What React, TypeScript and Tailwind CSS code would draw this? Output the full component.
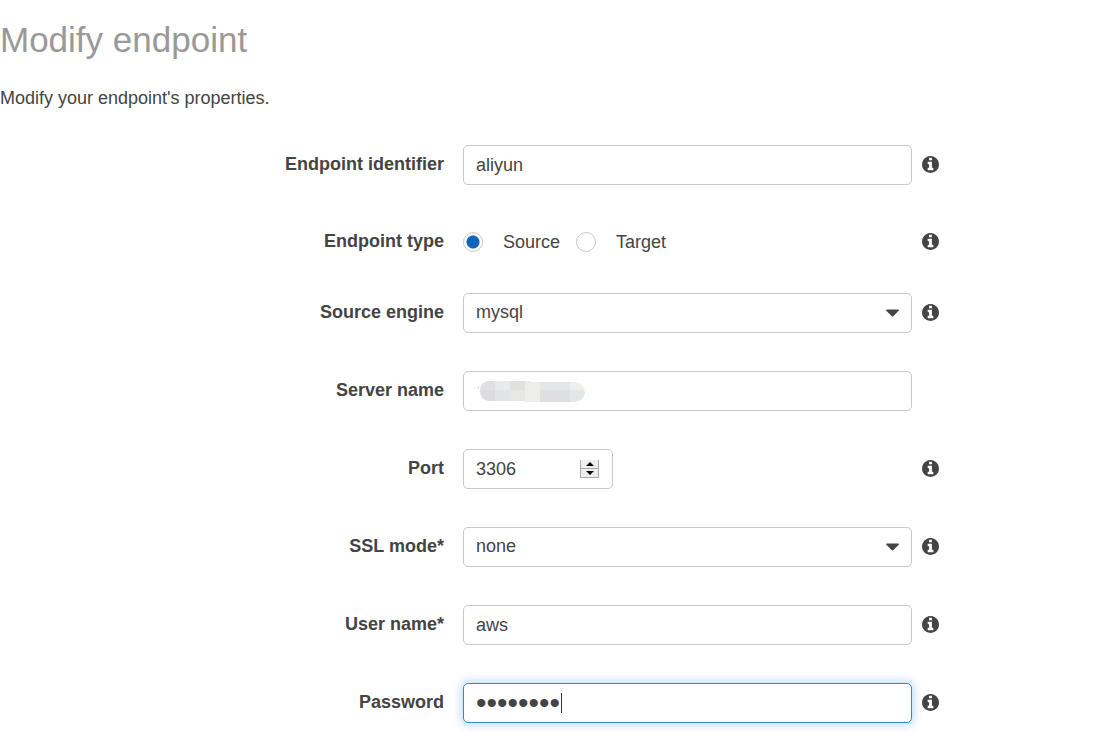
import { useRef, useState, type ReactNode } from "react";

function InfoIcon() {
  return (
    <svg viewBox="0 0 1536 1536" className="size-[17px] fill-current" aria-hidden="true">
      <path d="M1024 1248v-160q0-14-9-23t-23-9h-96v-512q0-14-9-23t-23-9h-320q-14 0-23 9t-9 23v160q0 14 9 23t23 9h96v320h-96q-14 0-23 9t-9 23v160q0 14 9 23t23 9h448q14 0 23-9t9-23zm-128-896v-160q0-14-9-23t-23-9h-192q-14 0-23 9t-9 23v160q0 14 9 23t23 9h192q14 0 23-9t9-23zm640 416q0 209-103 385.500t-279.500 279.500-385.500 103-385.500-103-279.500-279.500-103-385.500 103-385.500 279.500-279.500 385.500-103 385.500 103 279.500 279.500 103 385.500z" />
    </svg>
  );
}

const fieldClass =
  "h-10 w-full min-w-0 appearance-none rounded-[5px] border border-[#c8c8c8] bg-white px-3 text-[#444] outline-none focus:border-[#3184dd] focus:shadow-[0_0_10px_2px_rgba(49,132,221,0.3)]";

type RowProps = {
  label: string;
  htmlFor?: string;
  id?: string;
  info?: boolean;
  className?: string;
  children: ReactNode;
};

function Row({ label, htmlFor, id, info = true, className = "", children }: RowProps) {
  const labelClass = "pr-[19px] pb-[2px] text-right font-bold";
  return (
    <div className={`grid grid-cols-[minmax(0,463fr)_minmax(0,449fr)_minmax(0,202fr)] items-center ${className}`}>
      {htmlFor ? (
        <label htmlFor={htmlFor} className={labelClass}>{label}</label>
      ) : (
        <span id={id} className={labelClass}>{label}</span>
      )}
      {children}
      {info && (
        <button type="button" aria-label={`${label} info`} className="ml-[10px] flex h-[18px] w-[17px] cursor-pointer items-start">
          <InfoIcon />
        </button>
      )}
    </div>
  );
}

function SelectField({ id, options }: { id: string; options: string[] }) {
  return (
    <div className="grid items-center">
      <select id={id} className={`col-start-1 row-start-1 pb-[2px] pr-10 ${fieldClass}`}>
        {options.map((o) => (
          <option key={o}>{o}</option>
        ))}
      </select>
      <svg viewBox="0 0 13 8" className="pointer-events-none col-start-1 row-start-1 mr-[13px] h-2 w-[13px] justify-self-end fill-[#444]" aria-hidden="true">
        <path d="M1 0.5h11q1 0 .9.8-.1.4-.5.8L7.200 7.200q-.7.600-1.400 0L.600 2.100Q.2 1.700.1 1.300 0 .5 1 .5z" />
      </svg>
    </div>
  );
}

function RadioOption({ label, value, checked, onSelect }: { label: string; value: string; checked: boolean; onSelect: (v: string) => void }) {
  return (
    <label className="flex items-center gap-5">
      <input
        type="radio"
        name="endpoint-type"
        value={value}
        checked={checked}
        onChange={() => onSelect(value)}
        className="size-5 appearance-none rounded-full border border-[#c8c8c8] bg-white checked:bg-[radial-gradient(circle,#1166bb_6px,white_7px)]"
      />
      {label}
    </label>
  );
}

function MaskedText() {
  return (
    <svg viewBox="0 -1 108 22" className="pointer-events-none col-start-1 row-start-1 ml-[15px] h-[22px] w-[108px]" aria-hidden="true">
      <defs>
        <clipPath id="mask-shape">
          <path d="M9 0h43v1h45q9 1 10 10.500Q106 20 97 21H46v-1H11Q2 19 2 10 2 2 9 0z" />
        </clipPath>
      </defs>
      <rect x="0" y="6" width="1" height="1" fill="#f3b27c" />
      <g clipPath="url(#mask-shape)">
        <rect x="2" width="15" height="9" fill="#e0e0e2" />
        <rect x="17" width="15" height="9" fill="#e8eaee" />
        <rect x="32" width="15" height="9" fill="#e0e0df" />
        <rect x="2" y="9" width="15" height="11" fill="#dcdcde" />
        <rect x="17" y="9" width="15" height="11" fill="#e2e3e7" />
        <rect x="32" y="9" width="15" height="11" fill="#e7e7e8" />
        <rect x="47" width="15" height="21" fill="#ededec" />
        <rect x="62" y="1" width="30" height="8" fill="#e4e7e7" />
        <rect x="62" y="9" width="30" height="12" fill="#dfdfe0" />
        <rect x="92" y="1" width="15" height="8" fill="#eeefef" />
        <rect x="92" y="9" width="15" height="12" fill="#e5e6ea" />
      </g>
    </svg>
  );
}

const stepClass =
  "flex h-[9px] w-[19px] items-center justify-center border-x border-b border-[#aaa] bg-[#eee]";

function PortField() {
  const ref = useRef<HTMLInputElement>(null);
  return (
    <div className="grid w-[150px] items-center">
      <input
        ref={ref}
        id="port"
        type="number"
        defaultValue={3306}
        className={`col-start-1 row-start-1 [appearance:textfield] [&::-webkit-inner-spin-button]:appearance-none ${fieldClass}`}
      />
      <div className="col-start-1 row-start-1 mr-[14px] flex flex-col justify-self-end">
        <button type="button" aria-label="Increase port" className={stepClass} onClick={() => ref.current?.stepUp()}>
          <svg viewBox="0 0 8 4" className="h-1 w-2" aria-hidden="true"><path d="M4 0l4 4H0z" /></svg>
        </button>
        <button type="button" aria-label="Decrease port" className={stepClass} onClick={() => ref.current?.stepDown()}>
          <svg viewBox="0 0 8 4" className="h-1 w-2" aria-hidden="true"><path d="M0 0h8L4 4z" /></svg>
        </button>
      </div>
    </div>
  );
}

export default function App() {
  const [type, setType] = useState("source");
  return (
    <main className="min-h-screen overflow-x-hidden bg-white pt-5 pb-5 font-['Liberation_Sans',Arial,sans-serif] text-[18px] leading-6 text-[#444]">
      <h1 className="text-[35px] leading-10 text-[#999]">Modify endpoint</h1>
      <p className="mt-[26px]">Modify your endpoint's properties.</p>

      <form className="mt-[35px] flex flex-col gap-[38px]" onSubmit={(e) => e.preventDefault()}>
        <Row label="Endpoint identifier" htmlFor="identifier">
          <input id="identifier" type="text" defaultValue="aliyun" className={fieldClass} />
        </Row>

        <Row label="Endpoint type" id="type-label" className="pt-[6px]">
          <div role="radiogroup" aria-labelledby="type-label" className="flex h-[26px] items-center gap-4">
            <RadioOption label="Source" value="source" checked={type === "source"} onSelect={setType} />
            <RadioOption label="Target" value="target" checked={type === "target"} onSelect={setType} />
          </div>
        </Row>

        <Row label="Source engine" htmlFor="engine">
          <SelectField id="engine" options={["mysql"]} />
        </Row>

        <Row label="Server name" htmlFor="server" info={false}>
          <div className="grid items-center">
            <input id="server" type="text" className={`col-start-1 row-start-1 ${fieldClass}`} />
            <MaskedText />
          </div>
        </Row>

        <Row label="Port" htmlFor="port">
          <PortField />
        </Row>

        <Row label="SSL mode*" htmlFor="ssl">
          <SelectField id="ssl" options={["none"]} />
        </Row>

        <Row label="User name*" htmlFor="user">
          <input id="user" type="text" defaultValue="aws" className={fieldClass} />
        </Row>

        <Row label="Password" htmlFor="password">
          <div className="relative">
            <input
              id="password"
              type="password"
              defaultValue="password"
              className="block h-10 w-full appearance-none rounded-[5px] border border-[#3184dd] bg-white px-3 text-[30px] text-[#444] caret-transparent shadow-[0_0_10px_2px_rgba(49,132,221,0.3)] outline-none"
            />
            <span className="pointer-events-none absolute top-[10px] left-[98px] h-5 w-px bg-[#333]" />
          </div>
        </Row>
      </form>
    </main>
  );
}
